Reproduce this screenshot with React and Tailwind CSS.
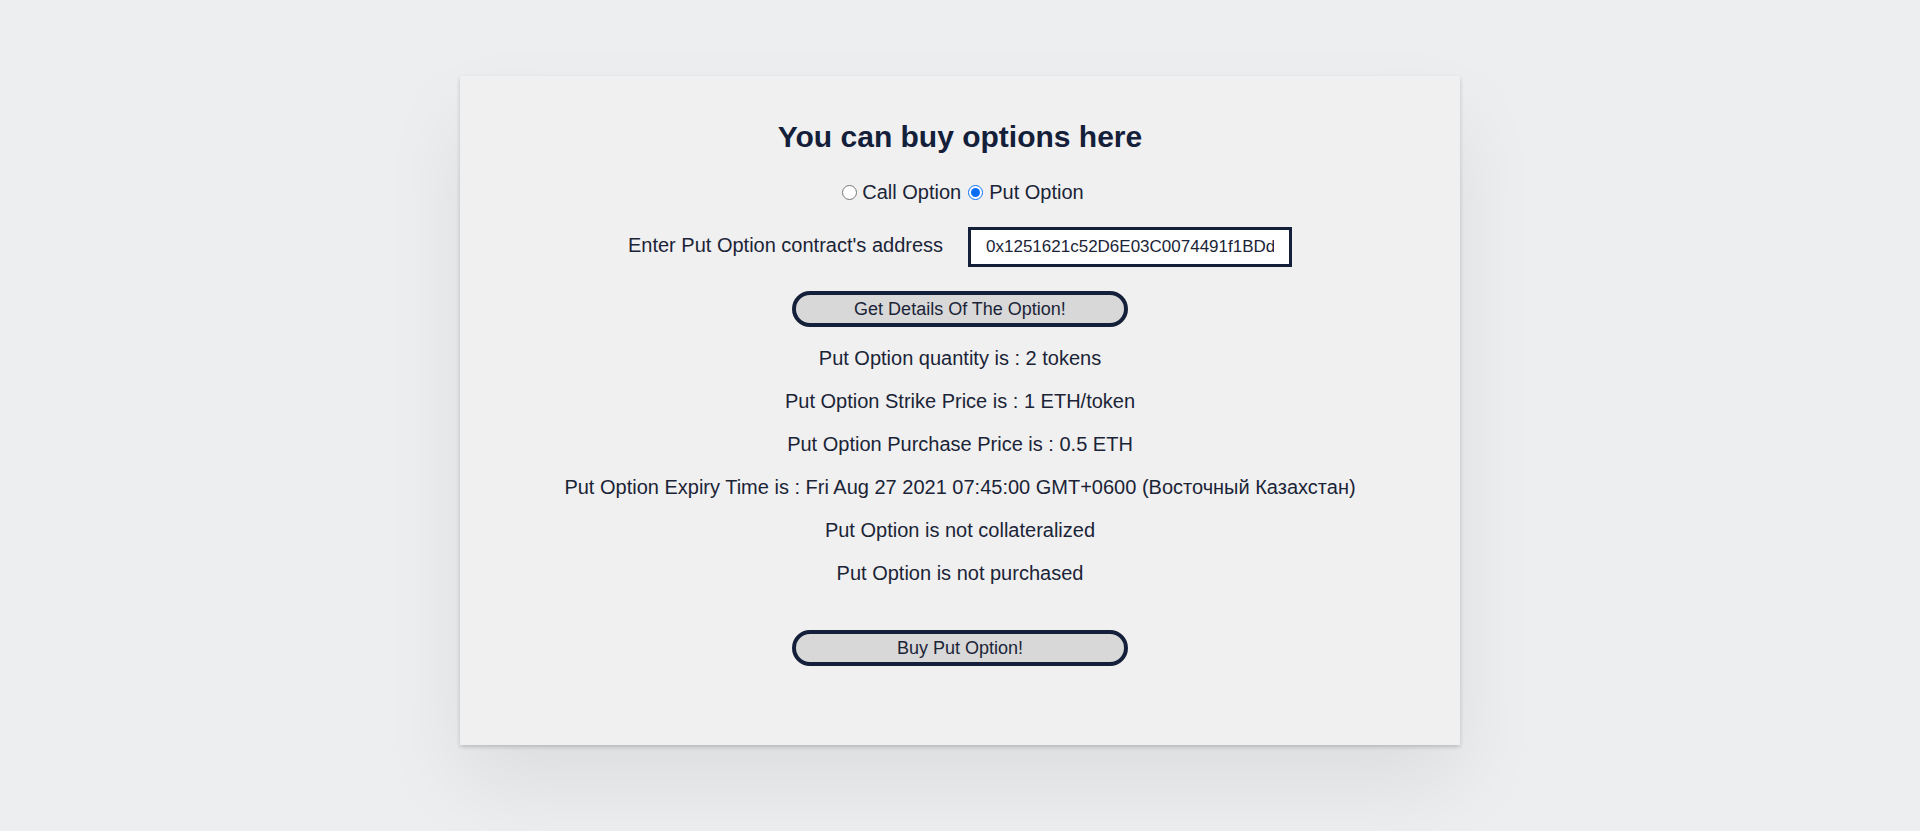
import { useState } from 'react';

const DETAILS = [
  'Put Option quantity is : 2 tokens',
  'Put Option Strike Price is : 1 ETH/token',
  'Put Option Purchase Price is : 0.5 ETH',
  'Put Option Expiry Time is : Fri Aug 27 2021 07:45:00 GMT+0600 (Восточный Казахстан)',
  'Put Option is not collateralized',
  'Put Option is not purchased',
];

export default function App() {
  const [kind, setKind] = useState('put');
  const [address, setAddress] = useState('0x1251621c52D6E03C0074491f1BDd1a2B3c4D5e6F');

  return (
    <div className="min-h-[831px] bg-[#eceef0] pt-[76px] font-['Liberation_Sans',Arial,sans-serif] text-[#1b2437]">
      <div className="mx-auto w-[1000px] h-[669px] bg-[#f0f0f0] shadow-[0_2px_4px_rgba(0,0,0,0.18),0_40px_80px_rgba(0,0,0,0.07)] pt-[44px] flex flex-col items-center text-[20px] leading-[23px]">
        <h2 className="text-[30px] leading-[34px] font-bold text-[#14203a]">You can buy options here</h2>

        <div className="mt-[27px] ml-[6px] flex items-center h-[23px]">
          <label className="flex items-center">
            <input
              type="radio"
              name="kind"
              checked={kind === 'call'}
              onChange={() => setKind('call')}
              className="w-[15px] h-[15px] mr-[5px] accent-[#0b6cf5]"
            />
            <span>Call Option</span>
          </label>
          <label className="flex items-center ml-[7px]">
            <input
              type="radio"
              name="kind"
              checked={kind === 'put'}
              onChange={() => setKind('put')}
              className="w-[15px] h-[15px] mr-[6px] accent-[#0b6cf5]"
            />
            <span>Put Option</span>
          </label>
        </div>

        <div className="mt-[23px] flex items-baseline gap-[25px]">
          <span>Enter Put Option contract's address</span>
          <input
            value={address}
            onChange={(e) => setAddress(e.target.value)}
            className="w-[324px] h-[40px] border-[3px] border-[#14203a] bg-white px-[15px] text-[17px] text-[#1b2437] outline-none"
          />
        </div>

        <button
          type="button"
          className="mt-[24px] w-[336px] h-[36px] rounded-full border-[4px] border-[#14203a] bg-[#d8d8d8] text-[18px] leading-none text-[#1b2437]"
        >
          Get Details Of The Option!
        </button>

        <div className="mt-[20px] flex flex-col items-center gap-[20px]">
          {DETAILS.map((line) => (
            <p key={line} className="whitespace-nowrap">{line}</p>
          ))}
        </div>

        <button
          type="button"
          className="mt-[45px] w-[336px] h-[36px] rounded-full border-[4px] border-[#14203a] bg-[#d8d8d8] text-[18px] leading-none text-[#1b2437]"
        >
          Buy Put Option!
        </button>
      </div>
    </div>
  );
}
